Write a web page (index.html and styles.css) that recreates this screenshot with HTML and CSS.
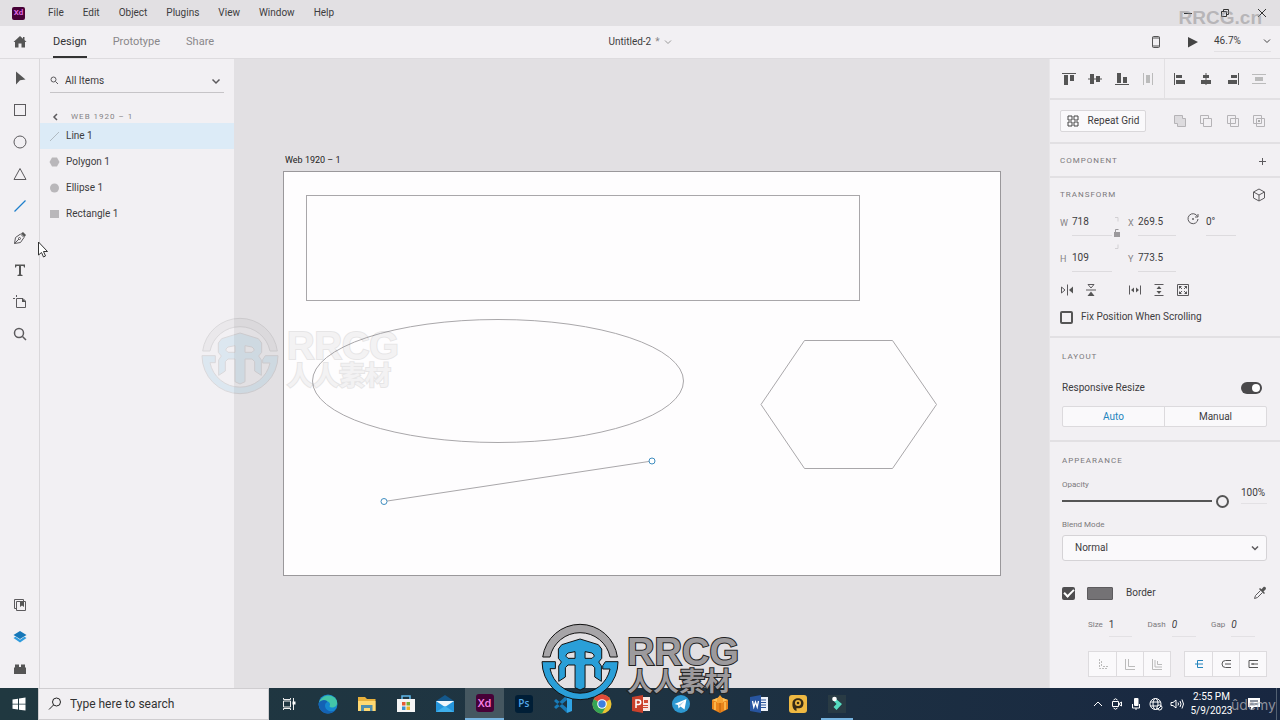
FILE: index.html
```
<!DOCTYPE html>
<html lang="en">
<head>
<meta charset="utf-8">
<title>Untitled-2 – Adobe XD</title>
<link rel="stylesheet" href="styles.css">
</head>
<body>
<div class="screen">
  <header class="titlebar">
    <span class="xd-logo">Xd</span>
    <nav class="menu">
      <button>File</button><button>Edit</button><button>Object</button><button>Plugins</button><button>View</button><button>Window</button><button>Help</button>
    </nav>
    <div class="window-controls">
      <button aria-label="Minimize"><svg width="12" height="12" viewBox="0 0 12 12"><path d="M2 6.500h8"/></svg></button>
      <button aria-label="Restore"><svg width="12" height="12" viewBox="0 0 12 12"><path d="M2.500 4.500h5v5h-5zM4.500 4V2.500h5v5H8"/></svg></button>
      <button aria-label="Close"><svg width="12" height="12" viewBox="0 0 12 12"><path d="M2 2l8 8M10 2l-8 8"/></svg></button>
    </div>
    <span class="site-mark">RRCG.cn</span>
  </header>

  <div class="modebar">
    <div class="mode-side">
      <button class="home" aria-label="Home"><svg width="14" height="14" viewBox="0 0 14 14"><path fill="#555" d="M7 1L0.500 7H2v5.500h3.500V8.500h3v4H12V7h1.500L11.500 5V2H10v1.700z"/></svg></button>
      <nav class="modes">
        <button class="mode current">Design</button><button class="mode">Prototype</button><button class="mode">Share</button>
      </nav>
    </div>
    <button class="doc-name">Untitled-2 <span class="dim">*</span> <svg width="8" height="8" viewBox="0 0 8 8"><path class="thin" d="M1 2.500l3 3 3-3"/></svg></button>
    <div class="preview">
      <button aria-label="Device preview"><svg width="12" height="14" viewBox="0 0 12 14"><rect x="2.500" y="1.500" width="7" height="11" rx="1" fill="none" stroke="#555"/><path d="M2 3h8M2 11h8" stroke="#555"/></svg></button>
      <button aria-label="Play"><svg width="12" height="14" viewBox="0 0 12 14"><path d="M1 2v10.500L11 7z" fill="#444"/></svg></button>
      <button class="zoom"><span>46.7%</span><svg width="8" height="8" viewBox="0 0 8 8"><path class="ink" d="M1 2.500l3 3 3-3"/></svg></button>
    </div>
  </div>

  <main class="workspace">
    <aside class="tools">
      <div class="tool-group">
        <button aria-label="Select"><svg width="16" height="16" viewBox="0 0 16 16"><path d="M4 1.500v13l4-4.300 5.500-.7z" fill="#555"/></svg></button>
        <button aria-label="Rectangle"><svg width="16" height="16" viewBox="0 0 16 16"><rect class="line" x="2.500" y="2.500" width="11" height="11"/></svg></button>
        <button aria-label="Ellipse"><svg width="16" height="16" viewBox="0 0 16 16"><circle class="line" cx="8" cy="8" r="6"/></svg></button>
        <button aria-label="Polygon"><svg width="16" height="16" viewBox="0 0 16 16"><path class="line" d="M8 2.500L14 13.500H2z"/></svg></button>
        <button aria-label="Line"><svg width="16" height="16" viewBox="0 0 16 16"><path d="M2.500 13.500l11-11" stroke="#1f80cc" stroke-width="1.300"/></svg></button>
        <button aria-label="Pen"><svg width="16" height="16" viewBox="0 0 16 16"><path class="line" d="M2.500 13.500l1-6L8.500 4l3.500 3.500L8.500 12.500zM2.500 13.500l4.500-4.500"/><circle class="line" cx="7.500" cy="8.500" r="1"/><path d="M9 3.500l2-1.500 3 3-1.500 2z" fill="#555"/></svg></button>
        <button aria-label="Text"><svg width="16" height="16" viewBox="0 0 16 16"><path d="M3 2.500h10v3h-1L11.500 4H9v8.500l1.500.5v1h-5v-1l1.500-.5V4H4.500L4 5.500H3z" fill="#555"/></svg></button>
        <button aria-label="Artboard"><svg width="16" height="16" viewBox="0 0 16 16"><path class="line" d="M4.500 4.500v9h9V7l-2.500-2.500zM1 4.500h2M4.500 1v2"/><path d="M10 4v4h4z" fill="#555"/></svg></button>
        <button aria-label="Zoom"><svg width="16" height="16" viewBox="0 0 16 16"><circle class="line bold" cx="7" cy="7" r="4.500"/><path class="line bold" d="M10.500 10.500l3.500 3.500"/></svg></button>
      </div>
      <div class="tool-group">
        <button aria-label="Libraries"><svg width="16" height="16" viewBox="0 0 16 16"><path class="line" d="M4.500 4.500h9v9h-9zM4.500 11.500h-2v-9h9v2"/><path d="M8 4.500h4v5.500l-2-1.500-2 1.500z" fill="#555"/></svg></button>
        <button aria-label="Layers"><svg width="16" height="16" viewBox="0 0 16 16"><path d="M8 2l6.500 4L8 10 1.500 6z" fill="#1677b8"/><path d="M1.500 9l2-1.200L8 10.800l4.500-3 2 1.200L8 13.500z" fill="#2f9bdd"/></svg></button>
        <button aria-label="Plugins"><svg width="16" height="16" viewBox="0 0 16 16"><path d="M2 13V7l1-1V3.500h4V6h2V3.500h4V6l1 1v6z" fill="#555"/></svg></button>
      </div>
    </aside>

    <section class="layers">
      <label class="filter">
        <svg width="9" height="9" viewBox="0 0 9 9"><circle class="line" cx="3.500" cy="3.500" r="2.500"/><path class="line" d="M5.500 5.500l2.500 2.500"/></svg>
        <input type="text" value="All Items" aria-label="Search layers">
        <svg width="10" height="10" viewBox="0 0 10 10"><path class="line bold" d="M1.500 3.500L5 7l3.500-3.500"/></svg>
      </label>
      <button class="crumb"><svg width="8" height="10" viewBox="0 0 8 10"><path class="line bold" d="M5 2L2 5l3 3"/></svg><span>WEB 1920 – 1</span></button>
      <ul class="layer-list">
        <li class="selected"><svg width="11" height="12" viewBox="0 0 11 12"><path d="M1 11L10 2" stroke="#b0bac2"/></svg>Line 1</li>
        <li><svg width="11" height="12" viewBox="0 0 11 12"><path d="M3 1.500h5L10.500 6 8 10.500H3L.5 6z" fill="#b9b7ba"/></svg>Polygon 1</li>
        <li><svg width="11" height="12" viewBox="0 0 11 12"><circle cx="5.500" cy="6" r="4.500" fill="#b9b7ba"/></svg>Ellipse 1</li>
        <li><svg width="11" height="12" viewBox="0 0 11 12"><path d="M1 2h9v8H1z" fill="#b9b7ba"/></svg>Rectangle 1</li>
      </ul>
    </section>

    <section class="canvas">
      <span class="artboard-name">Web 1920 – 1</span>
      <svg class="artboard" width="719" height="406" viewBox="0 0 719 406">
        <rect x="0.500" y="0.500" width="717" height="404" fill="#fefdfe" stroke="#9a989b"/>
        <g fill="none" stroke="#a9a7aa">
          <rect x="23.500" y="24.500" width="553" height="105"/>
          <ellipse cx="215" cy="210" rx="185.500" ry="61.500"/>
          <path d="M478 233.500L521.500 169.500H609.500L653.500 233.500L609.500 297.500H521.500z"/>
          <path d="M101 330.500L369 290"/>
        </g>
        <g fill="#fff" stroke="#3f8dc0"><circle cx="101" cy="330.500" r="3"/><circle cx="369" cy="290" r="3"/></g>
      </svg>
    </section>

    <aside class="inspector">
      <div class="row align">
        <div class="icons first">
          <button aria-label="Align top"><svg width="14" height="14" viewBox="0 0 14 14"><path d="M0 1h14v1H0zM2 3h4v10H2zM8 3h4v6H8z"/></svg></button>
          <button aria-label="Align middle"><svg width="14" height="14" viewBox="0 0 14 14"><path d="M0 6.500h14v1H0zM2 2h4v10H2zM8 4h4v6H8z"/></svg></button>
          <button aria-label="Align bottom"><svg width="14" height="14" viewBox="0 0 14 14"><path d="M0 12h14v1H0zM2 1h4v10H2zM8 5h4v6H8z"/></svg></button>
          <button disabled aria-label="Distribute horizontally"><svg width="14" height="14" viewBox="0 0 14 14"><path d="M2 1h1v12H2zM11 1h1v12h-1zM5 3h4v8H5z"/></svg></button>
        </div>
        <div class="icons second">
          <button aria-label="Align left"><svg width="14" height="14" viewBox="0 0 14 14"><path d="M1 1h1v12H1zM3 3h6v3H3zM3 8h9v4H3z"/></svg></button>
          <button aria-label="Align centre"><svg width="14" height="14" viewBox="0 0 14 14"><path d="M6.500 1h1v12h-1zM4 3h6v3H4zM2 8h10v4H2z"/></svg></button>
          <button aria-label="Align right"><svg width="14" height="14" viewBox="0 0 14 14"><path d="M12 1h1v12h-1zM5 3h6v3H5zM2 8h9v4H2z"/></svg></button>
          <button disabled aria-label="Distribute vertically"><svg width="14" height="14" viewBox="0 0 14 14"><path d="M0 2h14v1H0zM0 11h14v1H0zM3 5h8v4H3z"/></svg></button>
        </div>
      </div>

      <div class="row grid-row">
        <button class="repeat"><svg width="12" height="12" viewBox="0 0 12 12"><path d="M1 1h4v4H1zM7 1h4v4H7zM1 7h4v4H1zM7 7h4v4H7z" fill="none" stroke="#444"/></svg>Repeat Grid</button>
        <div class="icons bool">
          <button disabled aria-label="Add"><svg width="14" height="14" viewBox="0 0 14 14"><path class="pale solid" d="M1.500 1.500h8v3h3v8h-8v-3h-3z"/></svg></button>
          <button disabled aria-label="Subtract"><svg width="14" height="14" viewBox="0 0 14 14"><path class="pale" d="M9.500 4.500v-3h-8v8h3v-5zM4.500 4.500h8v8h-8z"/></svg></button>
          <button disabled aria-label="Intersect"><svg width="14" height="14" viewBox="0 0 14 14"><path class="pale" d="M1.500 1.500h8v8h-8zM4.500 4.500h8v8h-8z"/></svg></button>
          <button disabled aria-label="Exclude overlap"><svg width="14" height="14" viewBox="0 0 14 14"><path class="pale" d="M1.500 1.500h8v8h-8zM4.500 4.500h8v8h-8z"/><path d="M6 6h2v2H6z" fill="#aaa"/></svg></button>
        </div>
      </div>

      <div class="row component"><h2>COMPONENT</h2><button aria-label="Add component"><svg width="9" height="9" viewBox="0 0 9 9"><path class="line" d="M4.500 1v7M1 4.500h7"/></svg></button></div>

      <section class="row transform">
        <div class="head"><h2>TRANSFORM</h2><button aria-label="3D transform"><svg width="14" height="14" viewBox="0 0 14 14"><path class="line" d="M7 1l5.500 3v6L7 13 1.500 10V4zM1.500 4L7 7l5.500-3M7 7v6"/></svg></button></div>
        <div class="fields">
          <label for="w">W</label><input id="w" type="text" value="718">
          <button class="lock" aria-label="Lock aspect"><svg width="10" height="38" viewBox="0 0 10 38"><path d="M3 5.500h3v4M3 36.500h3v-4" fill="none" stroke="#d2d0d3"/><path d="M2 20h6v5H2z" fill="#9b999c"/><path d="M3.500 20v-2.500h3" fill="none" stroke="#9b999c"/></svg></button>
          <label for="x">X</label><input id="x" type="text" value="269.5">
          <svg class="rotate" width="14" height="14" viewBox="0 0 14 14"><path class="line" d="M11.500 4.500A5 5 0 1 0 12 7M12 2v3H9"/><circle cx="7" cy="7" r="1" fill="#666"/></svg>
          <input type="text" value="0°" aria-label="Rotation">
          <label for="h">H</label><input id="h" type="text" value="109">
          <label for="y">Y</label><input id="y" type="text" value="773.5">
        </div>
        <div class="flip">
          <button aria-label="Flip horizontal"><svg width="14" height="14" viewBox="0 0 14 14"><path class="line" d="M1.500 4v6L5 7zM7.500 1.500v11"/><path d="M13 3.500v7L9 7z" fill="#555"/></svg></button>
          <button aria-label="Flip vertical"><svg width="14" height="14" viewBox="0 0 14 14"><path class="line" d="M4 1.500h6L7 5zM2 7h10"/><path d="M3.500 13h7L7 8.500z" fill="#555"/></svg></button>
          <button class="gap-before" aria-label="Hug width"><svg width="14" height="14" viewBox="0 0 14 14"><path class="line" d="M1.500 2.500v9M12.500 2.500v9"/><path d="M6 4.500v5L3 7zM8 4.500v5L11 7z" fill="#555"/></svg></button>
          <button aria-label="Hug height"><svg width="14" height="14" viewBox="0 0 14 14"><path class="line" d="M2.500 1.500h9M2.500 12.500h9"/><path d="M4.500 6h5L7 3zM4.500 8h5L7 11z" fill="#555"/></svg></button>
          <button aria-label="Fit"><svg width="14" height="14" viewBox="0 0 14 14"><path class="line" d="M1.500 1.500h11v11h-11z"/><path d="M3 3h3L3 6zM11 3v3L8 3zM3 11V8l3 3zM11 11H8l3-3z" fill="#555"/><path class="line" d="M4 4l2 2M10 4L8 6M4 10l2-2M10 10L8 8"/></svg></button>
        </div>
        <label class="check"><input type="checkbox">Fix Position When Scrolling</label>
      </section>

      <section class="row layout">
        <h2>LAYOUT</h2>
        <label class="switch-row">Responsive Resize<input type="checkbox" class="switch" checked></label>
        <div class="segmented"><button class="on">Auto</button><button>Manual</button></div>
      </section>

      <section class="appearance">
        <h2>APPEARANCE</h2>
        <div class="opacity">
          <label for="opacity">Opacity</label>
          <input id="opacity" type="range" min="0" max="100" value="100">
          <input class="pct" type="text" value="100%" aria-label="Opacity value">
        </div>
        <label class="small" for="blend">Blend Mode</label>
        <div class="select-wrap">
          <select id="blend"><option>Normal</option></select>
          <svg width="8" height="8" viewBox="0 0 8 8"><path class="line bold" d="M1 2.500l3 3 3-3"/></svg>
        </div>
        <div class="border-row">
          <input type="checkbox" id="border" checked><span class="swatch"></span><label for="border">Border</label>
          <button aria-label="Eyedropper"><svg width="14" height="14" viewBox="0 0 14 14"><path class="line" d="M7.500 4.500L2.500 9.500 1.500 12.500l3-1 5-5"/><path d="M6 3l1-1 1.500 1.300L10.500 1c1.500-.8 3 .8 2.300 2.200L10.500 5.500 12 7l-1 1z" fill="#555"/></svg></button>
        </div>
        <div class="stroke-row">
          <div class="pair"><label for="size">Size</label><input id="size" type="text" value="1"></div>
          <div class="pair wide"><label for="dash">Dash</label><input id="dash" class="ital" type="text" value="0"></div>
          <div class="pair"><label for="gap">Gap</label><input id="gap" class="ital" type="text" value="0"></div>
        </div>
        <div class="stroke-kinds">
          <div class="set pale-set">
            <button aria-label="Inner stroke"><svg width="12" height="12" viewBox="0 0 12 12"><path d="M2.500 1v9.500H11M4.500 3v5.500M6 8.500h5" stroke-dasharray="2 1"/></svg></button>
            <button aria-label="Outer stroke"><svg width="12" height="12" viewBox="0 0 12 12"><path d="M1.500 1v10.500H11M4.500 1v7.500H11" /></svg></button>
            <button aria-label="Centre stroke"><svg width="12" height="12" viewBox="0 0 12 12"><path d="M1.500 1v10.500H11M4 2v7h7M6.500 3v3.500H11"/></svg></button>
          </div>
          <div class="set">
            <button class="on" aria-label="Butt cap"><svg width="12" height="12" viewBox="0 0 12 12"><path d="M10 2.500H4.500v7H10M2 6h8"/></svg></button>
            <button aria-label="Round cap"><svg width="12" height="12" viewBox="0 0 12 12"><path d="M11 2.500H5.500a3.500 3.500 0 0 0 0 7H11M5 6h6"/></svg></button>
            <button aria-label="Projecting cap"><svg width="12" height="12" viewBox="0 0 12 12"><path d="M11 2.500H2v7h9M4 6h7M6 5v2"/></svg></button>
          </div>
        </div>
      </section>
    </aside>
  </main>

  <footer class="taskbar">
    <button class="start" aria-label="Start"><svg width="14" height="14" viewBox="0 0 14 14"><path d="M.5 2.500L6 1.700v5H.5zM7 1.500L13.500.6v6.100H7zM.5 7.500H6v5L.5 11.700zM7 7.500h6.500v6.100L7 12.700z" fill="#fff"/></svg></button>
    <label class="search">
      <svg width="16" height="16" viewBox="0 0 16 16"><circle cx="9.500" cy="6" r="4" fill="none" stroke="#222"/><path d="M6.500 9L2 13.500" stroke="#222"/></svg>
      <input type="text" placeholder="Type here to search" aria-label="Type here to search">
    </label>
    <div class="apps">
      <button aria-label="Task view"><svg width="18" height="18" viewBox="0 0 18 18"><path d="M3.500 6h7v6h-7zM3.500 3v1.500h7V3M3.500 15v-1.500h7V15M13.500 3v12" fill="none" stroke="#eee"/><path d="M12.500 6.500h3v3h-3z" fill="#fff"/></svg></button>
      <button aria-label="Edge"><svg width="20" height="20" viewBox="0 0 20 20"><circle cx="10" cy="10" r="9.500" fill="#1587d0"/><path d="M1 9C3 0 15-1 18.500 6c2 5-1 7.500-4.500 7.500-2.500 0-3-1-2-2.500.5-3-3-4.500-6-3.500C3 8 1 10 1 12z" fill="#43c5a8"/><path d="M.7 9C4 4.500 9 6 9.500 8 6 9 6 15 11 17c3 1 6-.5 7-1.500C14 21 6 20.500 3 16.500 1 14 .4 11 .7 9z" fill="#1462b4"/></svg></button>
      <button aria-label="File Explorer"><svg width="20" height="20" viewBox="0 0 20 20"><path d="M1 3h7l2 2h8.500v12H1z" fill="#e8b13c"/><path d="M1 7h17.500v10H1z" fill="#ffd972"/><path d="M4 11h11.500v6H13v-3H7v3H4z" fill="#4f8eae"/></svg></button>
      <button aria-label="Store"><svg width="20" height="20" viewBox="0 0 20 20"><path d="M6 5V2h8v3" fill="none" stroke="#5fb8ea" stroke-width="1.500"/><path d="M1 5h18v13H1z" fill="#f5f5f5"/><path d="M6 8h3.500v3.500H6z" fill="#e75b35"/><path d="M10.500 8H14v3.500h-3.500z" fill="#79ae36"/><path d="M6 12.500h3.500V16H6z" fill="#3b91d0"/><path d="M10.500 12.500H14V16h-3.500z" fill="#efb528"/></svg></button>
      <button aria-label="Mail"><svg width="20" height="20" viewBox="0 0 20 20"><path d="M1 7l9-6 9 6z" fill="#14588c"/><path d="M1 7h18v11H1z" fill="#2595db"/><path d="M1 7h18l-9 6z" fill="#f1f6fa"/><path d="M1 18l9-6 9 6z" fill="#3fb0ec"/></svg></button>
      <button class="active"><span class="tile xd">Xd</span></button>
      <button><span class="tile ps">Ps</span></button>
      <button aria-label="VS Code"><svg width="20" height="20" viewBox="0 0 20 20"><path d="M14 1l5 2v14l-5 2z" fill="#30a4e5"/><path d="M14 1v5L3 15l-2-2zM14 19v-5L3 5 1 7z" fill="#187bb8"/></svg></button>
      <button aria-label="Chrome"><svg width="20" height="20" viewBox="0 0 20 20"><circle cx="10" cy="10" r="9.500" fill="#eac334"/><path d="M10 10L1.800 5.200a9.500 9.500 0 0 1 16.400 0z" fill="#df4938"/><path d="M10 10L1.800 5.200A9.500 9.500 0 0 0 10 19.500l4-7z" fill="#35a455"/><circle cx="10" cy="10" r="4.800" fill="#fff"/><circle cx="10" cy="10" r="3.700" fill="#3c7fe0"/></svg></button>
      <button aria-label="PowerPoint"><svg width="20" height="20" viewBox="0 0 20 20"><path d="M10 3h9v14h-9z" fill="#f7e9e5"/><path d="M13 6h4v3h-4zM12 11h5v1h-5zM12 13h5v1h-5z" fill="#d14c35"/><path d="M1 3l11-2v18L1 17z" fill="#c9412b"/><path d="M5 14V6h2.500a2 2 0 0 1 0 4.500H5" fill="none" stroke="#fff" stroke-width="1.500"/></svg></button>
      <button aria-label="Telegram"><svg width="20" height="20" viewBox="0 0 20 20"><circle cx="10" cy="10" r="9" fill="#2d98d1"/><path d="M3.500 10L15.500 5l-2 10.500-4-3-2 2-.5-3.500z" fill="#fff"/><path d="M7.500 11l6-4-4.500 5z" fill="#a7cfe6"/></svg></button>
      <button aria-label="Package"><svg width="20" height="20" viewBox="0 0 20 20"><path d="M2 6l8-3 8 3v9l-8 4-8-4z" fill="#e9851b"/><path d="M2 6l8 3 8-3-8-3z" fill="#ffc35b"/><path d="M10 9v10" stroke="#b95f0a"/><path d="M7 5l3-4 3 4v4H7z" fill="#f6a332"/><path d="M5 8v8M15 8v8" stroke="#ffc35b" stroke-width="1.500"/></svg></button>
      <button aria-label="Word"><svg width="20" height="20" viewBox="0 0 20 20"><path d="M10 3h9v14h-9z" fill="#edf1f8"/><path d="M12 6h5M12 8.500h5M12 11h5M12 13.500h5" stroke="#2c5599"/><path d="M1 3l11-2v18L1 17z" fill="#2855a0"/><path d="M3.500 7l1.300 6L6.500 8l1.700 5 1.300-6" fill="none" stroke="#fff" stroke-width="1.300"/></svg></button>
      <button aria-label="Player"><svg width="20" height="20" viewBox="0 0 20 20"><rect x="1" y="1" width="18" height="18" rx="3" fill="#efb942"/><path d="M4.500 9c0-6.500 11-6.500 11 0 0 5-4 6-7 5v3C5.500 16 4 13 4.500 9z" fill="#362b17"/><circle cx="10" cy="9" r="3" fill="#efb942"/><circle cx="10" cy="9" r="1.300" fill="#362b17"/></svg></button>
      <button class="running" aria-label="Filmora"><svg width="20" height="20" viewBox="0 0 20 20"><path d="M1 1h18v18H1z" fill="#293b44"/><path d="M5.500 5.500l3.500-.5 6 5-5.500 6-3-3 3-3z" fill="#55dcc0"/><circle cx="7.500" cy="5" r="2.300" fill="#fff"/></svg></button>
    </div>
    <div class="tray">
      <svg width="12" height="14" viewBox="0 0 12 14"><path d="M2 9l4-4 4 4"/></svg>
      <svg width="12" height="14" viewBox="0 0 12 14"><path d="M1.500 4.500h6v5h-6zM7.500 7l3-2v4zM2.500 3q2-2.500 4 0M2.500 11q2 2.500 4 0"/></svg>
      <svg width="12" height="14" viewBox="0 0 12 14"><rect x="4" y="1" width="4.500" height="8" rx="1" fill="#fff" stroke="none"/><path d="M2.500 7v4h7V7M6 11v2"/></svg>
      <svg width="14" height="14" viewBox="0 0 14 14"><circle cx="6.500" cy="7" r="5.500"/><ellipse cx="6.500" cy="7" rx="2.500" ry="5.500"/><path d="M1.500 5h10M1.500 9h10"/><circle cx="10.500" cy="10.500" r="2.500" fill="#1a2a40"/><path d="M9 12l3-3"/></svg>
      <svg width="14" height="14" viewBox="0 0 14 14"><path d="M1 5.500h2L6 3v8L3 8.500H1zM8 5.500q1 1.500 0 3M10 4q2 3 0 6M12 2.500q3 4.500 0 9"/></svg>
    </div>
    <div class="clock"><span>2:55 PM</span><span>5/9/2023</span></div>
    <div class="notes">
      <svg width="16" height="16" viewBox="0 0 16 16"><path d="M2 2h12v9H8l-3 3v-3H2z" fill="#fff"/><path d="M4 5h8M4 8h8" stroke="#1a2940"/></svg>
      <span class="course-mark">ûdemy</span>
    </div>
  </footer>

  <svg class="pointer" width="12" height="18" viewBox="0 0 12 18"><path d="M1.500 1v13l3-2.500 2 4.500 2-1-2-4.500h4z" fill="#fff" stroke="#333"/></svg>

  <div class="brand faint">
    <svg width="78" height="78" viewBox="31 12 234 234"><g stroke="#111" stroke-width="3">
      <path fill="#a7a5a8" d="M36 108A113 113 0 0 1 260 108H238A92 92 0 0 0 58 108z"/>
      <path fill="#2a9fd8" d="M34 122H74V143H58A92 92 0 0 0 238 144H216V134L224 122H262A114 114 0 0 1 34 122z"/>
      <path fill="#2a9fd8" fill-rule="evenodd" d="M148 54L203 71L213 84V112L204 123L212 135V181L192 168V140L184 132H163V200L148 207L133 200V132H112L104 140V168L84 181V135L92 123L83 112V84L93 71zM133 92L112 96L106 102V106L112 112H133zM163 92L184 96L190 102V106L184 112H163z"/></g></svg>
    <div class="brand-text"><b>RRCG</b><span lang="zh">人人素材</span></div>
  </div>
  <div class="brand strong">
    <svg width="78" height="78" viewBox="31 12 234 234"><g stroke="#111" stroke-width="3">
      <path fill="#a7a5a8" d="M36 108A113 113 0 0 1 260 108H238A92 92 0 0 0 58 108z"/>
      <path fill="#2a9fd8" d="M34 122H74V143H58A92 92 0 0 0 238 144H216V134L224 122H262A114 114 0 0 1 34 122z"/>
      <path fill="#2a9fd8" fill-rule="evenodd" d="M148 54L203 71L213 84V112L204 123L212 135V181L192 168V140L184 132H163V200L148 207L133 200V132H112L104 140V168L84 181V135L92 123L83 112V84L93 71zM133 92L112 96L106 102V106L112 112H133zM163 92L184 96L190 102V106L184 112H163z"/></g></svg>
    <div class="brand-text"><b>RRCG</b><span lang="zh">人人素材</span></div>
  </div>
</div>
</body>
</html>
```
FILE: styles.css
```
* { box-sizing: border-box; }
body { margin: 0; font: 10px/14px Roboto, "Noto Sans", "Noto Sans CJK SC", sans-serif; color: #3d3c3e; }
button, input, select { font: inherit; color: inherit; background: none; border: 0; padding: 0; margin: 0; border-radius: 0; outline: 0; }
button { display: flex; align-items: center; justify-content: center; }
input { min-width: 0; }
svg { display: block; flex: none; overflow: visible; }
h2 { margin: 0; font-size: 8px; font-weight: 400; line-height: 14px; letter-spacing: 1px; color: #7b797c; }
.line { fill: none; stroke: #5c5a5d; }
.bold { stroke-width: 1.5; }
.thin { fill: none; stroke: #999; }
.ink { fill: none; stroke: #444; }

.screen { position: relative; display: flex; flex-direction: column; height: 100vh; overflow: hidden; background: #f2f0f3; }

.titlebar { position: relative; display: flex; align-items: center; height: 26px; flex: none; padding: 0 12px; background: #e2e0e3; }
.xd-logo { width: 13px; height: 13px; border-radius: 2px; background: #470137; color: #e36be8; font-size: 8px; font-weight: 600; line-height: 12px; text-align: center; }
.menu { display: flex; gap: 19px; margin-left: 23px; }
.window-controls { display: flex; gap: 25px; margin-left: auto; }
.window-controls path { fill: none; stroke: #333; }
.site-mark { position: absolute; right: 18px; top: 7px; font: bold 19px/22px "Liberation Sans", sans-serif; color: rgba(140, 138, 141, .5); pointer-events: none; }

.modebar { display: grid; grid-template-columns: 1fr auto 1fr; align-items: center; height: 33px; flex: none; border-bottom: 1px solid #dddbde; }
.mode-side { display: flex; }
.home { width: 39px; height: 32px; }
.modes { display: flex; gap: 26px; padding-left: 14px; }
.mode { height: 32px; padding-top: 2px; font-size: 11px; color: #89878a; border-bottom: 2px solid transparent; }
.mode.current { color: #333; border-color: #333; }
.doc-name { gap: 4px; }
.dim { color: #888; }
.preview { display: flex; align-items: center; justify-content: flex-end; gap: 25px; padding-right: 9px; }
.zoom { justify-content: space-between; width: 57px; height: 20px; padding-bottom: 2px; border-bottom: 1px solid #e3e1e4; margin-left: -10px; }

.workspace { flex: 1; min-height: 0; display: grid; grid-template-columns: 40px 194px minmax(0, 1fr) 231px; }
.tools { display: flex; flex-direction: column; justify-content: space-between; padding: 3px 0; border-right: 1px solid #dad8db; }
.tool-group button { width: 39px; height: 32px; }
.layers { padding-top: 10px; }
.filter { display: flex; align-items: center; gap: 6px; height: 24px; margin: 0 10px; border-bottom: 1px solid #c6c4c7; padding-right: 3px; }
.filter input { flex: 1; }
.crumb { gap: 11px; height: 14px; margin: 17px 0 -1px 12px; font-size: 8px; letter-spacing: 1px; color: #858386; }
.layer-list { margin: 0; padding: 0; list-style: none; }
.layer-list li { display: flex; align-items: center; gap: 6px; height: 26px; padding-left: 9px; }
.layer-list .selected { background: #dcebf7; }

.canvas { position: relative; overflow: hidden; background: #e2e0e3; }
.artboard-name { position: absolute; left: 51px; top: 94px; font-size: 9px; color: #222; }
.artboard { position: absolute; left: 49px; top: 112px; }

.inspector { overflow: hidden; border-left: 1px solid #e8e6e9; }
.row { border-bottom: 2px solid #e2e0e3; }
.align { display: grid; grid-template-columns: 1fr 1fr; height: 41px; }
.icons { display: flex; align-items: center; justify-content: space-between; }
.align .icons { fill: #555; }
.first { padding: 0 9px 0 12px; border-right: 1px solid #e2e0e3; }
.second { padding: 0 14px 0 8px; }
.align button:disabled { fill: #bbb; }
.grid-row { display: flex; align-items: center; justify-content: space-between; height: 44px; padding: 0 14px 0 10px; }
.repeat { gap: 9px; width: 86px; height: 22px; background: #faf9fb; border: 1px solid #d9d7da; border-radius: 2px; }
.bool { width: 93px; }
.pale { fill: none; stroke: #b5b3b6; }
.pale.solid { fill: #dddbde; }
.component { display: flex; align-items: center; justify-content: space-between; height: 34px; padding: 2px 13px 0 10px; }
.transform { padding: 10px 14px 12px 10px; }
.head { display: flex; align-items: center; justify-content: space-between; height: 14px; }
.fields { display: grid; grid-template-columns: 12px 40px 16px 10px 38px 10px 14px 6px 30px; grid-template-rows: 24px 24px; row-gap: 12px; margin-top: 10px; align-items: stretch; }
.fields label { color: #858386; font-size: 9px; line-height: 22px; grid-column: 1; }
.fields input { border-bottom: 1px solid #dddbde; width: 100%; padding-bottom: 3px; grid-column: 2; }
.fields label[for="x"], .fields label[for="y"] { grid-column: 4; }
.fields #x, .fields #y { grid-column: 5; }
.lock { grid-column: 3; grid-row: 1 / 3; justify-content: flex-start; align-items: flex-start; }
.rotate { grid-column: 7; grid-row: 1; }
.fields input[aria-label] { grid-column: 9; grid-row: 1; }
#w, #x, label[for="w"], label[for="x"] { grid-row: 1; }
#h, #y, label[for="h"], label[for="y"] { grid-row: 2; }
.flip { display: flex; gap: 10px; margin-top: 11px; }
.gap-before { margin-left: 20px; }
.check { display: flex; align-items: center; gap: 8px; margin-top: 13px; }
.check input { appearance: none; width: 13px; height: 13px; border: 2px solid #555; border-radius: 2px; }
.layout { padding: 12px 13px 0 12px; height: 104px; }
.switch-row { display: flex; align-items: center; justify-content: space-between; height: 14px; margin-top: 17px; padding-right: 5px; }
.switch { appearance: none; width: 21px; height: 12px; border-radius: 6px; background: #4a494b; display: flex; justify-content: flex-end; padding: 2px; }
.switch::before { content: ""; width: 8px; height: 8px; border-radius: 50%; background: #fff; }
.segmented { display: flex; height: 21px; margin-top: 11px; border: 1px solid #dcdadd; border-radius: 2px; background: #faf9fb; }
.segmented button { flex: 1; }
.segmented button + button { border-left: 1px solid #dcdadd; }
.on { color: #2384bd; }

.appearance { padding: 12px 13px 0 12px; }
.opacity { display: grid; grid-template-columns: 168px 1fr; align-items: center; margin-top: 10px; column-gap: 11px; }
.opacity label, .small { font-size: 8px; color: #7b797c; grid-column: 1; }
.opacity input[type="range"] { appearance: none; width: 167px; height: 14px; margin-top: 2px; grid-column: 1; background: linear-gradient(#555, #555) 0 6px / 150px 2px no-repeat; }
.opacity input::-webkit-slider-thumb { appearance: none; width: 13px; height: 13px; border: 2px solid #555; border-radius: 50%; background: #f2f0f3; }
.pct { grid-column: 2; grid-row: 1 / 3; width: 100%; height: 22px; border-bottom: 1px solid #e3e1e4; }
.small { display: block; margin-top: 10px; }
.select-wrap { position: relative; margin-top: 3px; }
.select-wrap select { appearance: none; display: block; width: 100%; height: 26px; padding-left: 12px; background: #faf9fb; border: 1px solid #d5d3d6; border-radius: 3px; }
.select-wrap svg { position: absolute; right: 8px; top: 9px; pointer-events: none; }
.border-row { display: flex; align-items: center; height: 14px; margin-top: 25px; }
.border-row input { appearance: none; width: 13px; height: 13px; border-radius: 2px; background: #4f4e50; display: grid; place-items: center; }
.border-row input::before { content: ""; width: 8px; height: 4px; border: solid #fff; border-width: 0 0 2px 2px; rotate: -45deg; translate: 0 -1px; }
.swatch { width: 26px; height: 13px; margin: 0 13px 0 12px; background: #747275; border: 1px solid #5d5b5e; border-radius: 1px; }
.border-row button { margin-left: auto; }
.stroke-row { display: flex; justify-content: space-between; margin: 13px 12px 0 26px; }
.pair { display: flex; align-items: center; gap: 6px; width: 44px; }
.pair.wide { width: 48px; }
.pair label { font-size: 8px; color: #7b797c; }
.pair input { flex: 1; height: 24px; border-bottom: 1px solid #e3e1e4; }
.ital { font-style: italic; }
.stroke-kinds { display: flex; justify-content: space-between; margin: 14px 0 0 26px; }
.set { display: flex; border: 1px solid #dddbde; background: #faf9fb; }
.set button { width: 27px; height: 24px; }
.set button + button { border-left: 1px solid #dddbde; }
.set path { fill: none; stroke: #555; }
.set .on path { stroke: #2384bd; }
.pale-set path { stroke: #bbb; }

.taskbar { display: flex; flex: none; height: 32px; color: #fff; background: linear-gradient(90deg, #203840, #1e3342 50%, #182741); }
.start { width: 38px; }
.search { display: flex; align-items: center; gap: 7px; width: 231px; padding-left: 8px; background: #f1eff2; border: 1px solid #cfcdd0; color: #333; }
.search input { flex: 1; font-size: 12px; }
.search input::placeholder { color: #333; opacity: 1; }
.apps { display: grid; grid-template-columns: repeat(15, 1fr); width: 588px; }
.apps .active { background: #455760; border-bottom: 2px solid #76b3df; }
.apps .running { background: linear-gradient(#76b3df, #76b3df) center bottom / 32px 2px no-repeat; }
.tile { width: 18px; height: 18px; border-radius: 3px; font: 600 11px/17px "Open Sans", sans-serif; text-align: center; }
.xd { background: #470137; color: #ff81e9; }
.ps { background: #001e36; color: #54a9e8; font-size: 10px; }
.tray { display: flex; align-items: center; gap: 7px; margin-left: auto; }
.tray svg { fill: none; stroke: #fff; }
.clock { display: flex; flex-direction: column; justify-content: center; align-items: center; width: 55px; }
.notes { position: relative; display: flex; align-items: center; width: 38px; margin-right: 3px; padding-left: 7px; border-right: 1px solid #526071; }
.course-mark { position: absolute; left: -8px; top: 8px; font: 14px/18px Inter, sans-serif; color: rgba(190, 190, 195, .7); }

.pointer { position: absolute; left: 37px; top: 241px; }
.brand { position: absolute; display: flex; align-items: center; gap: 8px; pointer-events: none; }
.brand-text { display: flex; flex-direction: column; color: #9c9a9d; -webkit-text-stroke: 2px #222; paint-order: stroke fill; }
.brand-text b { font: bold 38px/32px "Liberation Sans", sans-serif; }
.brand-text span { font: bold 26px/24px "Noto Sans CJK SC", sans-serif; }
.strong { left: 50%; bottom: 17px; translate: -50% 0; }
.faint { left: 201px; top: 319px; opacity: .1; }
```
